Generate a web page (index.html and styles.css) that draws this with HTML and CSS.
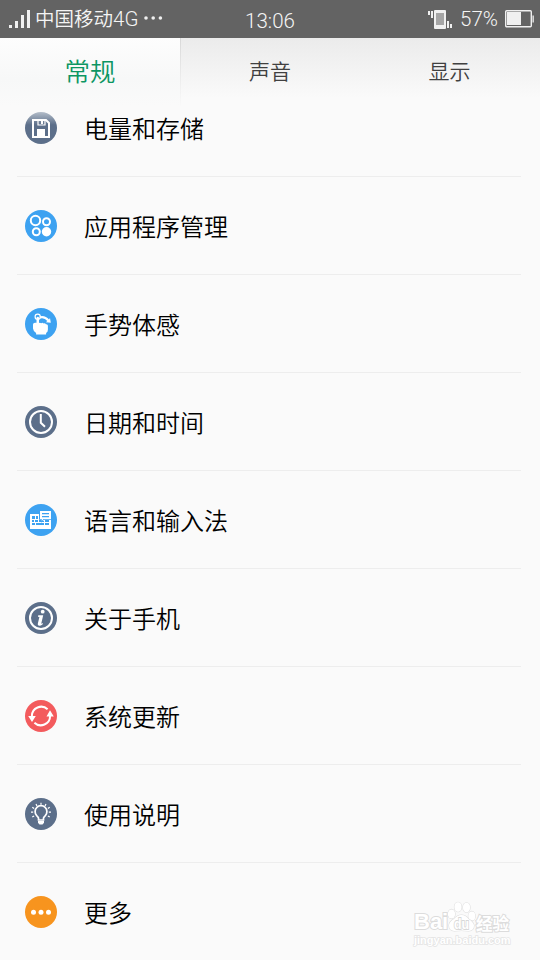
FILE: index.html
```html
<!DOCTYPE html>
<html lang="zh-CN">
<head>
<meta charset="utf-8">
<title>设置</title>
<link rel="stylesheet" href="styles.css">
</head>
<body>
<div class="phone">
  <header class="status">
    <div class="status-left">
      <svg class="signal" width="22" height="19" viewBox="0 0 22 19"><path d="M0 15h3v3H0zM6 11h3v7H6zM12 5h3v13h-3zM18 0h3v18h-3z"/></svg>
      <span class="carrier">中国移动<span class="net">4G</span></span>
      <svg class="dots" width="20" height="4" viewBox="0 0 20 4"><circle cx="2" cy="2" r="1.800"/><circle cx="9.200" cy="2" r="1.800"/><circle cx="16.400" cy="2" r="1.800"/></svg>
    </div>
    <time class="clock">13:06</time>
    <div class="status-right">
      <svg class="vibrate" width="26" height="20" viewBox="0 0 26 20"><path d="M0 2h2v4H0zM3 2h2v7H3zM19 12h2v7h-2zM22 15h2v4h-2z"/><rect x="6" y="1" width="12" height="19" rx="1"/><rect class="screen" x="8" y="4" width="8" height="12"/></svg>
      <span class="percent">57%</span>
      <svg class="battery" width="30" height="18" viewBox="0 0 30 18"><rect class="case" x=".7" y=".7" width="25.600" height="16.100" rx="1"/><path d="M2 2h14v13H2zM27.500 5.500h1.300v7h-1.300z"/></svg>
    </div>
  </header>
  <nav class="tabs">
    <a class="tab active">常规</a>
    <a class="tab">声音</a>
    <a class="tab">显示</a>
  </nav>
  <main class="list">
    <div class="row first">
      <svg class="icon" viewBox="0 0 32 32"><defs><linearGradient id="fade" x1="0" y1="0" x2="0" y2="1"><stop offset="0" stop-color="#b3bdc9"/><stop offset=".4" stop-color="#5c6f8a"/></linearGradient></defs><circle cx="16" cy="16" r="16" fill="url(#fade)"/><path class="line" d="M8 8h13l3 3v14H8z"/><path class="line thin" d="M13 8v5h7V8"/><path class="fill" d="M16 9h2v3h-2zM12 17h8v8h-8z"/></svg>
      <span class="label">电量和存储</span>
    </div>
    <div class="row">
      <svg class="icon blue" viewBox="0 0 32 32"><circle class="disc" cx="16" cy="16" r="16"/><circle class="line" cx="10.500" cy="10.500" r="4.700"/><circle class="line" cx="21.500" cy="11.800" r="3.500"/><circle class="line" cx="11.300" cy="21.700" r="3.500"/><circle class="fill" cx="21.500" cy="21.700" r="4.700"/></svg>
      <span class="label">应用程序管理</span>
    </div>
    <div class="row">
      <svg class="icon blue" viewBox="0 0 32 32"><circle class="disc" cx="16" cy="16" r="16"/><circle class="line thin" cx="12.700" cy="8.800" r="2.600"/><path class="fill" d="M11.500 9.500q1.300-1.400 2.500 0V15q1-.8 2.200.2 1.300-.8 2.500.3 1.500-.6 2.200.8 2-.3 2 1.500v4q0 2.200-1.800 3.200v1.500h-10V25Q8 22.500 8 20.500v-4q0-1.800 2-1.800h1.500z"/><path class="fill" d="M14.500 8.200q6-1.400 9.500 3.300l1-1.500.8 4.800-5-.6 1.500-1.200q-2.800-3.500-7-2.500z"/></svg>
      <span class="label">手势体感</span>
    </div>
    <div class="row">
      <svg class="icon slate" viewBox="0 0 32 32"><circle class="disc" cx="16" cy="16" r="16"/><circle class="line" cx="16" cy="16" r="11"/><path class="line" d="M15.800 8v8.800l4.200 3.900"/></svg>
      <span class="label">日期和时间</span>
    </div>
    <div class="row">
      <svg class="icon blue" viewBox="0 0 32 32"><circle class="disc" cx="16" cy="16" r="16"/><path class="fill" d="M5 10h21v15H5z"/><path class="disc" d="M7 12h3v3H7zM11 12h2v3h-2zM14 12h2v3h-2zM7 16h2v2H7zM10 16h3v2h-3zM14 16h2v2h-2zM17 17h2v1h-2zM20 16h4v2h-4zM7 19h3v2H7zM11 19h8v2h-8zM20 19h4v2h-4z"/><path class="disc" d="M14 6.200h13v9.600h-8l-3 3v-3h-2z"/><path class="fill" d="M15 7h11v8h-7.400L16.700 17v-2H15z"/><path class="disc" d="M17 9h7v1.300h-7zM17 12h7v1.300h-7z"/></svg>
      <span class="label">语言和输入法</span>
    </div>
    <div class="row">
      <svg class="icon slate" viewBox="0 0 32 32"><circle class="disc" cx="16" cy="16" r="16"/><circle class="line" cx="16" cy="16" r="11"/><circle class="fill" cx="17.700" cy="9.700" r="1.900"/><path class="fill" d="M13.300 13.200h4.900l-2 8.500 1.800-.8-.5 1.700q-2 1.400-3.500 1.200-1.600-.3-1.200-2l1.600-6.800-1.500-.3z"/></svg>
      <span class="label">关于手机</span>
    </div>
    <div class="row">
      <svg class="icon red" viewBox="0 0 32 32"><circle class="disc" cx="16" cy="16" r="16"/><path class="line" d="M6.900 16a9.300 9.300 0 0 1 15.700-6.700M25.100 16A9.300 9.300 0 0 1 9.400 22.700"/><path class="fill" d="M3.200 16h7.600L7 22zM21.500 16.500h7.300L25 10.300z"/></svg>
      <span class="label">系统更新</span>
    </div>
    <div class="row">
      <svg class="icon slate" viewBox="0 0 32 32"><circle class="disc" cx="16" cy="16" r="16"/><path class="line bulb" d="M13.500 22v-2q-.3-1-1.800-2.400a5.900 5.900 0 1 1 8.600 0q-1.500 1.400-1.800 2.400v2z"/><path class="fill" d="M13 23h6v1.800l-1.500 1.700h-3L13 24.800z"/><path class="line rays" d="M16 4.700v2M11 6l1 2M21 6l-1 2M7.300 9.300l1.800 1.300M24.700 9.300l-1.800 1.300M6 14.200h2.200M26 14.200h-2.200M7.300 19l1.800-1.100M24.700 19l-1.800-1.100"/></svg>
      <span class="label">使用说明</span>
    </div>
    <div class="row">
      <svg class="icon orange" viewBox="0 0 32 32"><circle class="disc" cx="16" cy="16" r="16"/><circle class="fill" cx="8.500" cy="16.300" r="2.500"/><circle class="fill" cx="16" cy="16.300" r="2.500"/><circle class="fill" cx="23.500" cy="16.300" r="2.500"/></svg>
      <span class="label">更多</span>
    </div>
  </main>
  <div class="watermark">
    <div class="brand">
      <span class="bai">Bai</span>
      <svg class="paw" width="29" height="31" viewBox="0 0 29 31"><ellipse cx="4.500" cy="13" rx="3.600" ry="4.600"/><ellipse cx="11" cy="6" rx="3.600" ry="4.800"/><ellipse cx="19.500" cy="6.500" rx="3.600" ry="4.800"/><ellipse cx="24.800" cy="15" rx="3.500" ry="4.600"/><path d="M14.500 14q4 0 7 4 5 3 5.500 6.500 0 5-5.500 5.500-7-1-14 0-5.500-.5-5.500-5.500 0-3.500 5-6.500 3.500-4 7.500-4z"/><text class="du" x="7" y="28" textLength="15" lengthAdjust="spacingAndGlyphs">du</text></svg>
      <span class="exp">经验</span>
    </div>
    <div class="url">jingyan.baidu.com</div>
  </div>
</div>
</body>
</html>
```
FILE: styles.css
```css
* { box-sizing: border-box; }

body {
  margin: 0;
  background: #fafafa;
  font-family: "Roboto", "Noto Sans CJK SC", sans-serif;
}

.phone {
  position: relative;
  width: 540px;
  height: 960px;
  overflow: hidden;
  display: flex;
  flex-direction: column;
}

.status {
  height: 38px;
  flex: none;
  display: grid;
  grid-template-columns: 1fr auto 1fr;
  background: #636363;
  color: #f5f5f5;
  fill: #f0f0f0;
  font-weight: 350;
  line-height: 38px;
}

.status-left, .status-right { display: flex; align-items: center; }
.status-left { padding-left: 9px; padding-bottom: 1px; }
.signal { margin-right: 4px; }
.carrier { font-size: 19.5px; height: 38px; line-height: 36px; white-space: nowrap; }
.net { font-size: 20.5px; }
.dots { margin-left: 6px; margin-bottom: 3px; }
.clock { font-size: 20.5px; padding-top: 2px; }
.status-right { justify-content: flex-end; padding: 0 5px 2px 0; }
.vibrate { margin-right: 6px; }
.screen { fill: #a5a5a5; }
.percent { font-size: 20.5px; margin-right: 7px; }
.battery { margin-bottom: 1px; }
.case { fill: none; stroke: #f0f0f0; stroke-width: 1.4; }

.tabs {
  height: 60px;
  flex: none;
  display: grid;
  grid-template-columns: 181px 178px 181px;
  background: linear-gradient(#ebebeb, #fafafa);
}

.tab {
  font-size: 21px;
  font-weight: 350;
  line-height: 68px;
  text-align: center;
  color: #404040;
}

.active {
  font-size: 25.5px;
  color: #0c9663;
  background: linear-gradient(#fdfdfd, #f7f8f8 60%, #fafafa);
  border-right: 1px solid;
  border-image: linear-gradient(#d8d8d8, #fafafa) 1;
}

.list { padding: 0 19px 0 17px; }

.row {
  height: 98px;
  display: flex;
  align-items: center;
  padding-left: 8px;
  border-bottom: 1px solid #ededed;
}

.first { height: 79px; padding-bottom: 18px; }
.row:last-child { border-bottom: 0; }

.icon { width: 32px; height: 32px; margin-right: 27px; overflow: visible; }
.label { font-size: 24px; font-weight: 350; line-height: 36px; padding-top: 4px; color: #000; }
.first .label, .row:last-child .label { padding-top: 3px; }

.blue .disc { fill: #3da2f1; }
.slate .disc { fill: #5c6f8a; }
.red .disc { fill: #f35b5d; }
.orange .disc { fill: #f7941e; }
.fill { fill: #fff; }
.line { fill: none; stroke: #fff; stroke-width: 2; }
.thin { stroke-width: 1.2; }
.bulb { stroke-width: 1.7; }
.rays { stroke-width: 1.2; }

.watermark {
  position: absolute;
  left: 414px;
  top: 901px;
  width: 100px;
  color: #fff;
  -webkit-text-stroke: 2px #dcdcdc;
  paint-order: stroke fill;
}
.brand { display: flex; align-items: flex-end; height: 33px; }
.bai { width: 33px; font: 700 22px/24px "Liberation Sans", sans-serif; }
.paw { fill: #fff; stroke: #dedede; stroke-width: 1.1; overflow: visible; margin-bottom: 2px; }
.du { font: 700 15px "Liberation Sans", sans-serif; fill: #fff; -webkit-text-stroke: 0; stroke: #d8d8d8; stroke-width: 1.8; }
.exp { font: 700 16.5px/22px "Noto Sans CJK SC", sans-serif; }
.url {
  font: 700 11px/12px "Liberation Sans", sans-serif;
  -webkit-text-stroke: 1.5px #e4e4e4;
}
```
